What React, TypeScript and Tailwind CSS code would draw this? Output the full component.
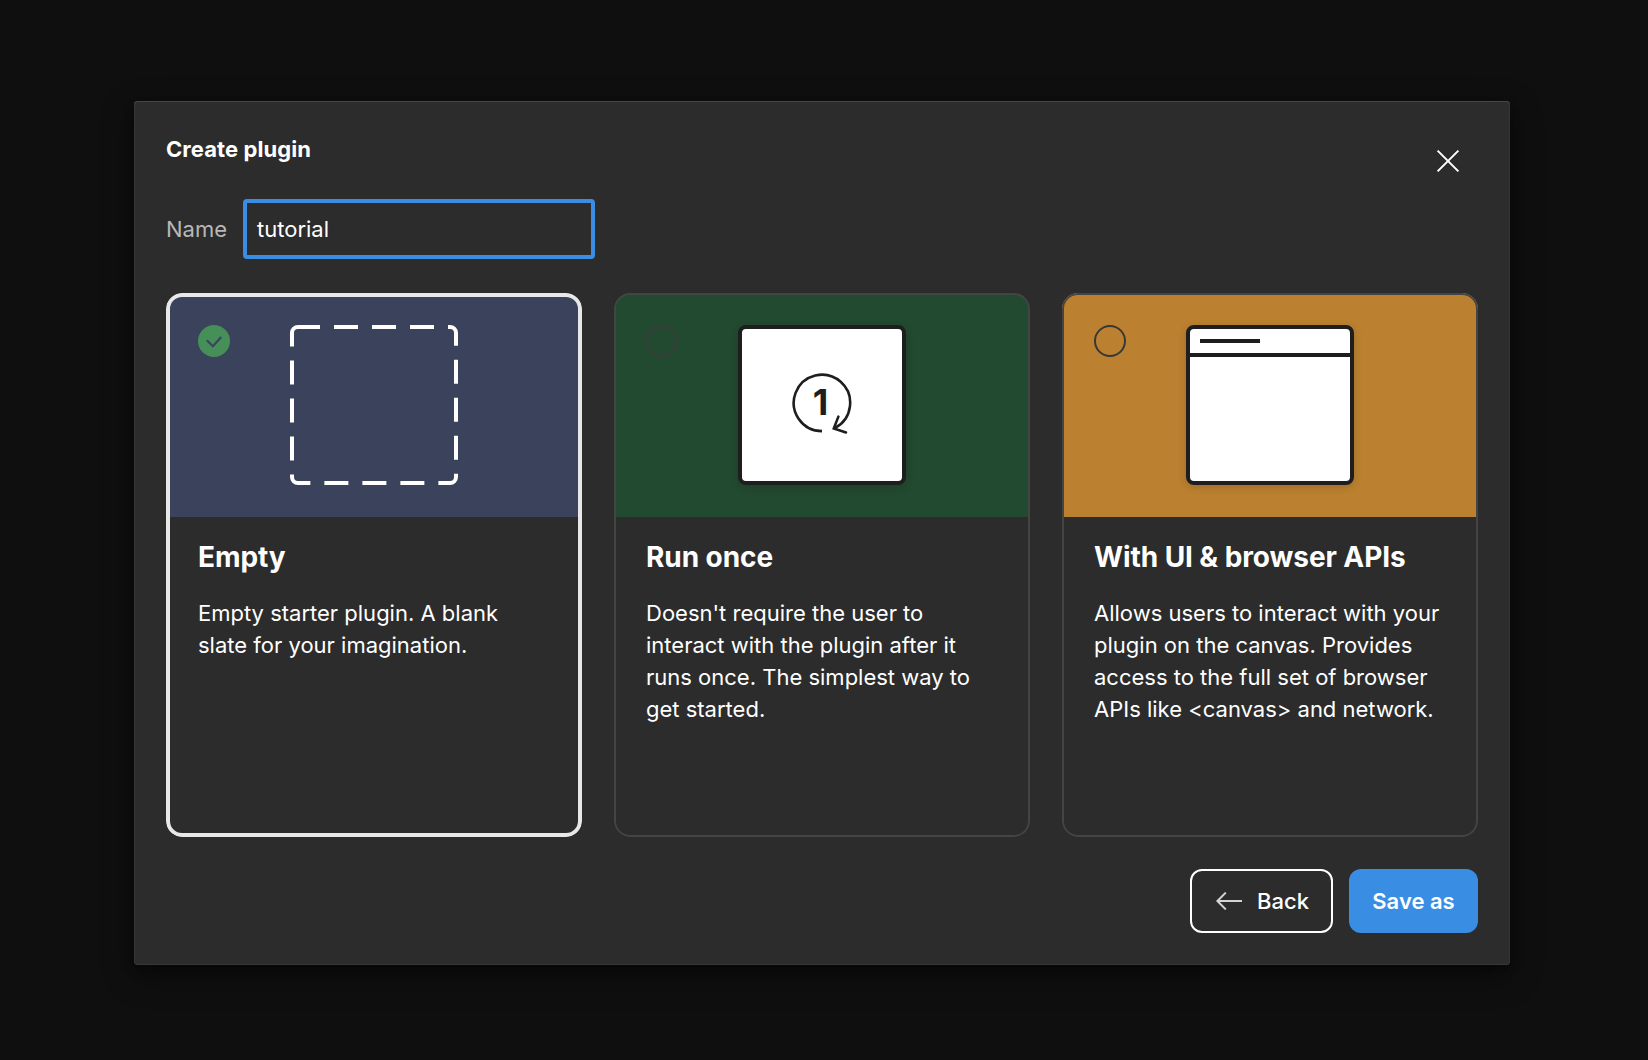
import React from "react";

function CloseIcon() {
  return (
    <svg width="24" height="24" viewBox="0 0 24 24" fill="none" stroke="#fff" strokeWidth="2">
      <path d="M1.6 1.6 22.4 22.4M22.4 1.6 1.6 22.4" />
    </svg>
  );
}

function SelectedMark() {
  return (
    <svg width="32" height="32" viewBox="0 0 32 32" fill="none">
      <circle cx="16" cy="16" r="16" fill="#468f58" />
      <path d="M8.8 15.2 14.9 21.2 23.2 12" stroke="#3a425e" strokeWidth="2" />
    </svg>
  );
}

function EmptyArt() {
  return (
    <svg width="168" height="160" viewBox="0 0 168 160" fill="none">
      <rect x="2" y="2" width="164" height="156" rx="6" stroke="#fff" strokeWidth="4" strokeDasharray="24 14" strokeDashoffset="2" />
    </svg>
  );
}

function RunOnceArt() {
  return (
    <div className="flex h-40 w-[168px] items-center justify-center rounded-lg border-4 border-[#1e1e1e] bg-white shadow-[0_2px_8px_rgba(0,0,0,0.16)]">
      <svg width="64" height="64" viewBox="0 0 64 64" fill="none" stroke="#1e1e1e" strokeWidth="2.6">
        <path d="M32 58.1A28.2 28.2 0 1 1 45 54.9L43.6 55.6" />
        <path d="M48.4 43.6 43.8 55.4 56 59.4" strokeLinecap="round" />
        <text x="30.4" y="42" textAnchor="middle" fill="#1e1e1e" stroke="none" className="font-['Inter'] text-[36px] font-bold">
          1
        </text>
      </svg>
    </div>
  );
}

function WindowArt() {
  return (
    <div className="flex h-40 w-[168px] flex-col rounded-lg border-4 border-[#1e1e1e] bg-white shadow-[0_2px_8px_rgba(0,0,0,0.16)]">
      <div className="h-7 border-b-4 border-[#1e1e1e] px-2.5 pt-2.5">
        <div className="h-1 w-[60px] bg-[#1e1e1e]" />
      </div>
    </div>
  );
}

type CardProps = {
  title: string;
  lines: string[];
  art: React.ReactNode;
  tone: string;
  ring?: string;
  selected?: boolean;
};

function Card({ title, lines, art, tone, ring = "", selected }: CardProps) {
  return (
    <div className="relative h-[544px] overflow-hidden rounded-2xl bg-[#2c2c2c]">
      <div className={`relative flex h-56 justify-center pt-8 ${tone}`}>
        <div className="absolute left-8 top-8">
          {selected ? <SelectedMark /> : <div className={`size-8 rounded-full border-2 ${ring}`} />}
        </div>
        {art}
      </div>
      <div className="px-8 pt-5">
        <h2 className="text-[28px] font-bold leading-10 tracking-[-0.08px]">{title}</h2>
        <p className="mt-5 whitespace-nowrap text-[22px] leading-8">
          {lines.map((line) => (
            <span key={line} className="block">
              {line}
            </span>
          ))}
        </p>
      </div>
      <div
        className={`pointer-events-none absolute inset-0 rounded-2xl ${
          selected ? "border-4 border-[#e8e8e6]" : "border-2 border-[#444444]"
        }`}
      />
    </div>
  );
}

export default function App() {
  return (
    <div className="h-[1060px] w-[1648px] overflow-hidden bg-[#0f0f0f] pl-[134px] pt-[101px] font-['Inter',sans-serif] text-white">
      <div className="h-[864px] w-[1376px] rounded-[4px] bg-[#2c2c2c] px-8 shadow-[inset_0_1px_0_#464646,inset_0_0_0_1px_#363636,0_10px_32px_rgba(0,0,0,0.45),0_4px_10px_rgba(0,0,0,0.3)]">
        <div className="flex h-[98px] justify-between pt-8">
          <h1 className="text-[22px] font-bold leading-8 tracking-[0.08px]">Create plugin</h1>
          <button className="mr-[18px] mt-4 size-6">
            <CloseIcon />
          </button>
        </div>
        <div className="flex h-[60px] items-center">
          <label className="w-[77px] text-[22px] leading-8 text-[#b8b8b8]">Name</label>
          <div className="flex h-[60px] w-[352px] items-center rounded-[4px] border-4 border-[#398ee4] px-2.5 text-[22px] leading-8">
            tutorial
          </div>
        </div>
        <div className="mt-[34px] grid grid-cols-3 gap-8">
          <Card
            title="Empty"
            lines={["Empty starter plugin. A blank", "slate for your imagination."]}
            art={<EmptyArt />}
            tone="bg-[#3a425c]"
            selected
          />
          <Card
            title="Run once"
            lines={["Doesn't require the user to", "interact with the plugin after it", "runs once. The simplest way to", "get started."]}
            art={<RunOnceArt />}
            tone="bg-[#224a30]"
            ring="border-[#3c3c3c]"
          />
          <Card
            title="With UI & browser APIs"
            lines={[
              "Allows users to interact with your",
              "plugin on the canvas. Provides",
              "access to the full set of browser",
              "APIs like <canvas> and network.",
            ]}
            art={<WindowArt />}
            tone="bg-[#bb8130]"
            ring="border-[#383838]"
          />
        </div>
        <div className="mt-8 flex justify-end gap-4 text-[22px] font-medium leading-8">
          <button className="flex h-16 w-[143px] items-center rounded-xl border-2 border-white pl-6">
            <svg width="26" height="18" viewBox="0 0 26 18" fill="none" stroke="#d4d4d4" strokeWidth="2">
              <path d="M26 9H1.4M9.8.6 1.4 9l8.4 8.4" />
            </svg>
            <span className="ml-[15px]">Back</span>
          </button>
          <button className="h-16 w-[129px] rounded-xl bg-[#398ee4] font-semibold">Save as</button>
        </div>
      </div>
    </div>
  );
}
